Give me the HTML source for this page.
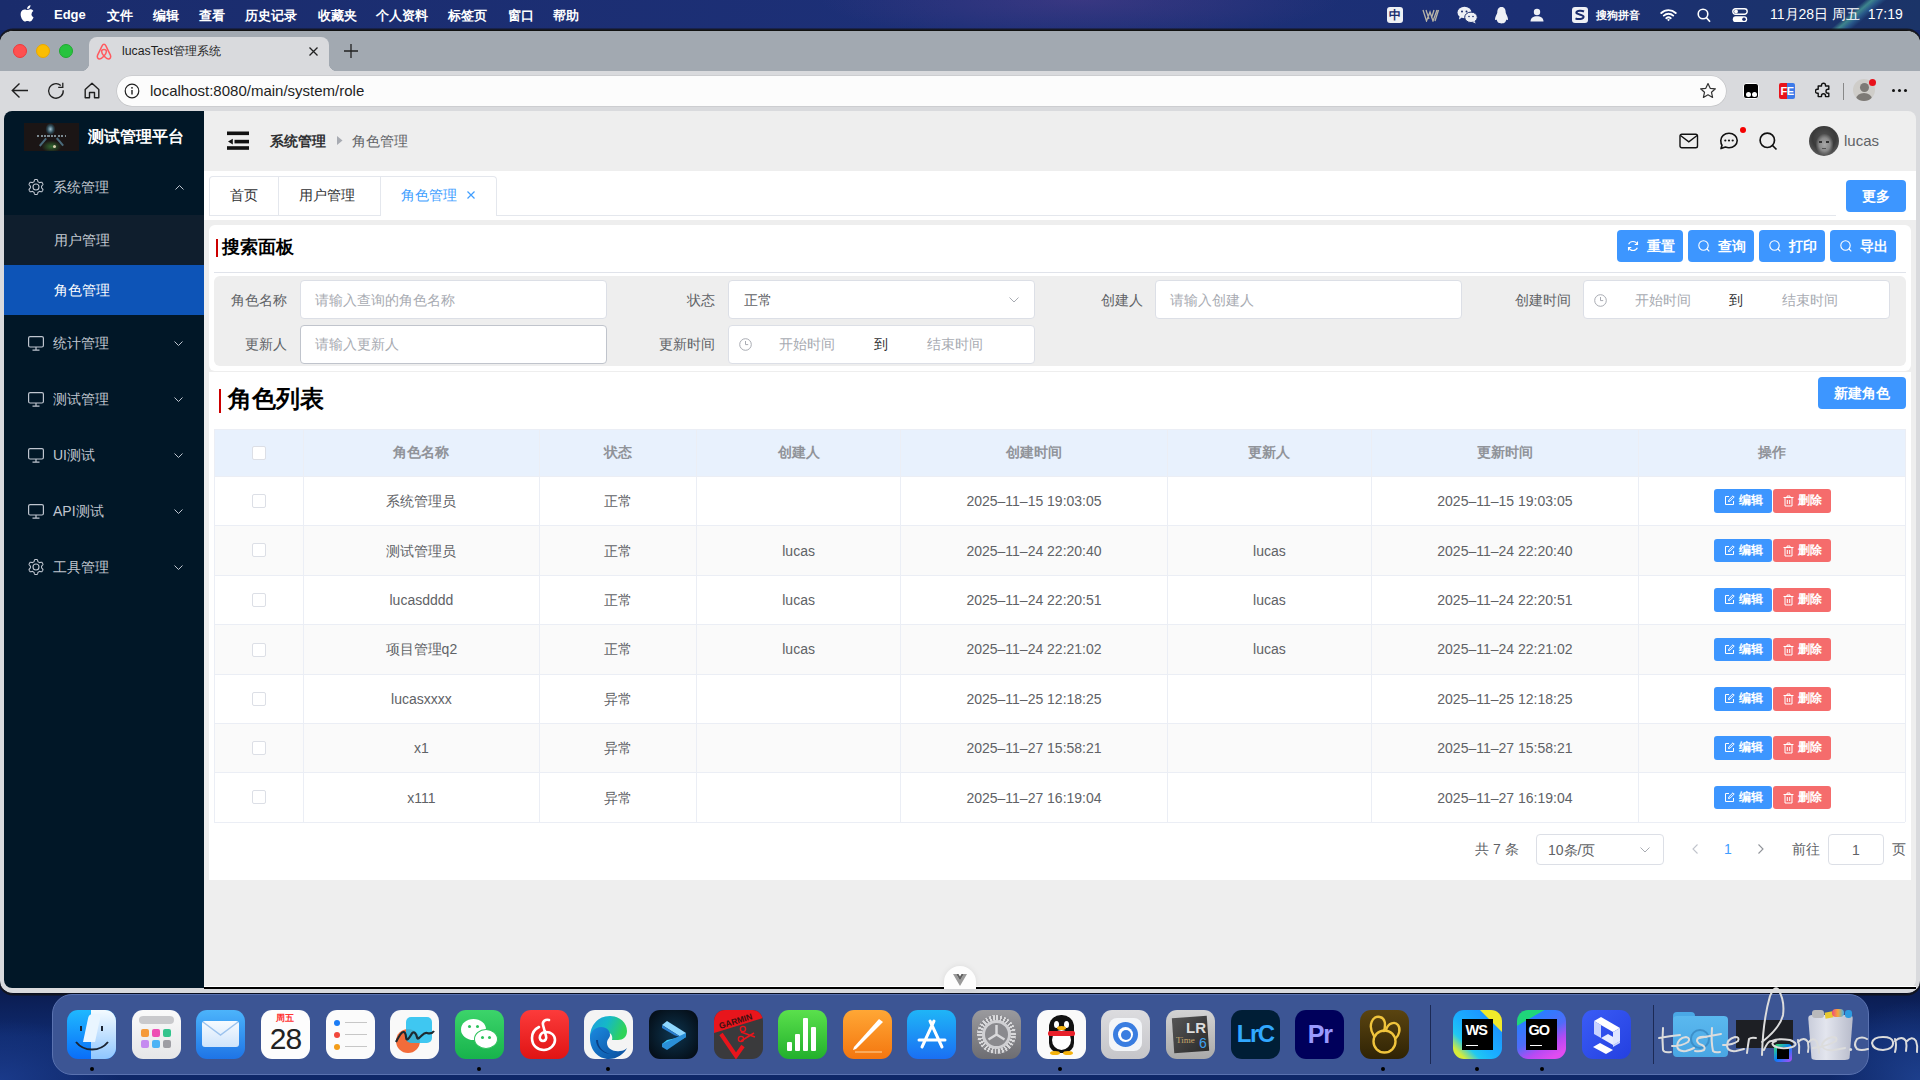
<!DOCTYPE html>
<html><head><meta charset="utf-8">
<style>
*{box-sizing:border-box;margin:0;padding:0}
html,body{width:1920px;height:1080px;overflow:hidden}
body{font-family:"Liberation Sans",sans-serif;position:relative;background:#0b1a4c}
.abs{position:absolute}
#desk{left:0;top:0;width:1920px;height:1080px;background:radial-gradient(ellipse 120px 60px at 0 1080px,#1a3a8a,transparent),radial-gradient(ellipse 90px 80px at 1920px 1080px,#1d3f8c,transparent),linear-gradient(180deg,#13266a 0%,#0b1d52 92%,#0f2a6e 96%,#0f2868 100%)}
#menubar{left:0;top:0;width:1920px;height:30px;background:radial-gradient(ellipse 260px 40px at 1080px 0,rgba(110,70,150,.35),transparent),linear-gradient(90deg,#1a2c6c 0%,#1d3078 50%,#1b2f74 80%,#1b3468 100%);color:#fff;font-size:14px}
#menubar span{position:absolute;top:7px;line-height:17px;white-space:nowrap;font-weight:600;font-size:13px}
#win{left:0;top:30px;width:1920px;height:964px;border-radius:13px;background:#d9dadd;overflow:hidden;border-top:1px solid #111;border-bottom:1px solid #0a0f20;box-shadow:0 0 0 1.5px rgba(20,20,25,.85)}
#tabbar{left:0;top:0;width:1920px;height:40px;background:#a2a9b1}
#toolbar{left:0;top:40px;width:1920px;height:41px;background:#d9dadd}
#page{left:4px;top:111px;width:1912px;height:877px;background:#eeeeee;border-radius:8px;overflow:hidden}
.menu{left:0;width:200px;height:56px}
.mt{top:18px;font-size:14px;line-height:20px;color:#c0c6cf;white-space:nowrap}
.mt2{top:15px;font-size:14px;line-height:20px;white-space:nowrap}
.btn{background:#3d96ff;color:#fff;border-radius:4px;text-align:center;font-weight:bold;white-space:nowrap}
.inp{width:307px;height:39px;background:#fff;border:1px solid #dcdfe6;border-radius:4px}
.ph{top:9px;font-size:14px;line-height:20px;color:#a8abb2;white-space:nowrap}
.lbl{font-size:14px;line-height:20px;color:#606266;white-space:nowrap}
.hl{height:1px;background:#ebeef5}
.vl{width:1px;background:#ebeef5}
.th{text-align:center;font-size:14px;color:#909399;font-weight:bold;white-space:nowrap}
.td{text-align:center;font-size:14px;color:#606266;white-space:nowrap;padding-top:.5px}
.cb{width:14px;height:14px;border:1px solid #dcdfe6;border-radius:2px;background:#fff}
.ob{width:57.5px;height:23.6px;border-radius:3px;color:#fff;font-size:12px;font-weight:bold;white-space:nowrap}
.ob span{top:3px;line-height:17px}
.pg{font-size:14px;line-height:20px;color:#606266;white-space:nowrap}
.di{top:1010px;width:49px;height:49px;border-radius:11px;overflow:hidden}
</style></head><body>
<div id="desk" class="abs"></div>
<div id="menubar" class="abs">
 <div class="abs" style="left:1800px;top:0;width:120px;height:30px;overflow:hidden"><div class="abs" style="left:45px;top:-20px;width:14px;height:80px;transform:rotate(50deg);background:linear-gradient(90deg,transparent,rgba(90,200,170,.55),rgba(70,170,210,.3),transparent)"></div></div>
 <span style="left:20px;top:5px">
  <svg width="14" height="17" viewBox="0 0 14 17"><path fill="#fff" d="M11.6 9c0-2 1.7-3 1.8-3.1-1-1.4-2.5-1.6-3-1.6-1.3-.1-2.5.8-3.1.8-.7 0-1.7-.8-2.7-.7C3.200 4.400 2 5.200 1.300 6.400c-1.400 2.500-.4 6.100 1 8.100.7 1 1.500 2.100 2.500 2 1 0 1.400-.6 2.600-.6s1.500.6 2.600.6 1.800-1 2.400-2c.8-1.100 1.100-2.200 1.100-2.300-.1 0-2.100-.8-2.100-3.200zM9.600 3c.6-.7 1-1.700.9-2.700-.9 0-1.900.6-2.500 1.300-.6.600-1 1.600-.9 2.600 1 .1 1.900-.5 2.500-1.200z"/></svg>
 </span>
 <span style="left:54px;top:6px;font-weight:bold">Edge</span>
 <span style="left:107px">文件</span>
 <span style="left:153px">编辑</span>
 <span style="left:199px">查看</span>
 <span style="left:245px">历史记录</span>
 <span style="left:317.5px">收藏夹</span>
 <span style="left:376px">个人资料</span>
 <span style="left:447.5px">标签页</span>
 <span style="left:507.5px">窗口</span>
 <span style="left:552.5px">帮助</span>
 <div class="abs" style="left:1387px;top:7px;width:16px;height:16px;border-radius:3px;background:#eef0f5;color:#1a2c6c;font-size:12px;line-height:16px;text-align:center;font-weight:bold">中</div>
 <svg class="abs" style="left:1422px;top:9px" width="18" height="13" viewBox="0 0 18 13"><path d="M1 1l3.500 11L8 3l3 9L15 1M4 1l3 9M12 1L9.500 9M16.500 1L13 12" fill="none" stroke="#b8b4a8" stroke-width="1.300"/></svg>
 <svg class="abs" style="left:1457px;top:6px" width="21" height="18" viewBox="0 0 21 18"><ellipse cx="7.500" cy="6.500" rx="7" ry="5.800" fill="#eef0f5"/><path d="M2.500 10.500L2 13.500l3-2z" fill="#eef0f5"/><ellipse cx="14" cy="11.300" rx="6.300" ry="5.200" fill="#eef0f5" stroke="#1a2c6c" stroke-width="1"/><path d="M17.500 15l1.200 2.600-3.100-1.700z" fill="#eef0f5"/><circle cx="5" cy="5.500" r="1" fill="#1a2c6c"/><circle cx="9.500" cy="5.500" r="1" fill="#1a2c6c"/><circle cx="12" cy="10.500" r=".8" fill="#1a2c6c"/><circle cx="16" cy="10.500" r=".8" fill="#1a2c6c"/></svg>
 <svg class="abs" style="left:1494px;top:6px" width="15" height="18" viewBox="0 0 15 18"><path d="M7.500 1C4.300 1 3.300 3.500 3.300 6.500c0 1.400-2.300 4-2.300 6.500 0 1.500.8 1.300 1.600.4.4 1.500 1.200 2.700 1.700 3.200.6.600 2 .9 3.200.9s2.600-.3 3.200-.9c.5-.5 1.300-1.700 1.700-3.200.8.900 1.600 1.100 1.600-.4 0-2.500-2.300-5.100-2.300-6.500C11.700 3.500 10.700 1 7.500 1z" fill="#eef0f5"/></svg>
 <svg class="abs" style="left:1530px;top:8px" width="14" height="14" viewBox="0 0 14 14"><circle cx="7" cy="4" r="3.200" fill="#eef0f5"/><path d="M.5 13.500c0-3.500 2.800-5.200 6.500-5.200s6.500 1.700 6.500 5.200z" fill="#eef0f5"/></svg>
 <div class="abs" style="left:1572px;top:7px;width:16px;height:16px;border-radius:3px;background:#eef0f5"></div>
 <svg class="abs" style="left:1574px;top:9px" width="12" height="12" viewBox="0 0 12 12"><path d="M10 2.500C8 1.500 3 1.200 2.300 3.600 1.800 5.500 9.500 5.300 9.600 7.600 9.700 10.200 4 10.600 1.500 9.300" fill="none" stroke="#1a2c6c" stroke-width="2"/></svg>
 <span style="left:1596px;top:8px;font-size:11px;line-height:14px;font-weight:bold">搜狗拼音</span>
 <svg class="abs" style="left:1660px;top:8px" width="17" height="14" viewBox="0 0 17 14"><path d="M1.300 5A10.500 10.500 0 0 1 15.700 5M3.800 7.600a7 7 0 0 1 9.400 0M6.300 10.200a3.400 3.400 0 0 1 4.400 0" fill="none" stroke="#fff" stroke-width="1.900" stroke-linecap="round"/><path d="M8.500 13.300l-1.400-1.500a2 2 0 0 1 2.800 0z" fill="#fff"/></svg>
 <svg class="abs" style="left:1697px;top:8px" width="14" height="15" viewBox="0 0 14 15"><circle cx="6" cy="6" r="4.800" fill="none" stroke="#fff" stroke-width="1.600"/><path d="M9.500 9.800l3.500 4" stroke="#fff" stroke-width="1.700"/></svg>
 <svg class="abs" style="left:1732px;top:8px" width="16" height="15" viewBox="0 0 16 15"><rect x=".8" y=".8" width="14.400" height="5.400" rx="2.700" fill="none" stroke="#fff" stroke-width="1.400"/><circle cx="4" cy="3.500" r="1.900" fill="#fff"/><rect x=".8" y="8.300" width="14.400" height="5.800" rx="2.900" fill="#fff"/><circle cx="12" cy="11.200" r="1.800" fill="#1a2c6c"/></svg>
 <span style="left:1770px;top:6px;font-weight:500;font-size:14px">11月28日 周五&nbsp;&nbsp;17:19</span>
</div>
<div id="win" class="abs">
 <div id="tabbar" class="abs"></div>
 <div id="toolbar" class="abs"></div>
</div>
<div class="abs" style="left:13px;top:44px;width:14px;height:14px;border-radius:50%;background:#fe5050;border:1px solid #f0383a"></div>
<div class="abs" style="left:36px;top:44px;width:14px;height:14px;border-radius:50%;background:#fbbd02;border:1px solid #eaa800"></div>
<div class="abs" style="left:59px;top:44px;width:14px;height:14px;border-radius:50%;background:#28c33f;border:1px solid #1faa30"></div>
<!-- tab -->
<div class="abs" style="left:89px;top:37px;width:240px;height:35px;background:#d9dadd;border-radius:8px 8px 0 0"></div>
<div class="abs" style="left:81px;top:63px;width:8px;height:8px;background:radial-gradient(circle at 0 0,#a2a9b1 8px,#d9dadd 8.5px)"></div>
<div class="abs" style="left:329px;top:63px;width:8px;height:8px;background:radial-gradient(circle at 100% 0,#a2a9b1 8px,#d9dadd 8.5px)"></div>
<svg class="abs" style="left:96px;top:43px" width="16" height="17" viewBox="0 0 16 17"><path fill="none" stroke="#ff5a5f" stroke-width="1.5" d="M8 1.2c-.9 0-1.400.6-1.900 1.600L1.600 12.100c-.9 2 .2 3.900 2.100 3.900 1.500 0 2.800-1.200 4.300-2.900 1.500 1.700 2.800 2.900 4.300 2.900 1.900 0 3-1.900 2.100-3.900L9.900 2.800C9.400 1.800 8.900 1.200 8 1.200zM8 13.100c-1.500-1.900-2.400-3.400-2.400-4.600 0-1.300.9-2.100 2.400-2.100s2.400.8 2.400 2.100c0 1.200-.9 2.700-2.400 4.600z"/></svg>
<div class="abs" style="left:122px;top:43px;font-size:12.300px;line-height:16px;color:#1f1f1f;font-weight:500">lucasTest管理系统</div>
<svg class="abs" style="left:309px;top:47px" width="9" height="9" viewBox="0 0 9 9"><path d="M.5.5l8 8M8.5.5l-8 8" stroke="#222" stroke-width="1.3"/></svg>
<svg class="abs" style="left:344px;top:44px" width="14" height="14" viewBox="0 0 14 14"><path d="M7 0v14M0 7h14" stroke="#222" stroke-width="1.3"/></svg>
<!-- nav icons -->
<svg class="abs" style="left:11px;top:82px" width="18" height="17" viewBox="0 0 18 17"><path d="M17 8.5H1.5M8.500 1.500L1.300 8.500l7.200 7" fill="none" stroke="#1f1f1f" stroke-width="1.4"/></svg>
<svg class="abs" style="left:47px;top:82px" width="18" height="18" viewBox="0 0 18 18"><path d="M16.200 8.200A7.300 7.300 0 1 1 13.800 3.500" fill="none" stroke="#1f1f1f" stroke-width="1.3"/><path d="M11.200 5.400h4.600V.8" fill="none" stroke="#1f1f1f" stroke-width="1.3"/></svg>
<svg class="abs" style="left:84px;top:82px" width="16" height="17" viewBox="0 0 16 17"><path d="M1.200 7.500L8 1.300l6.800 6.200v8.200h-4.300v-5.200H5.500v5.200H1.200z" fill="none" stroke="#1f1f1f" stroke-width="1.4" stroke-linejoin="round"/></svg>
<div class="abs" style="left:117px;top:76px;width:1609px;height:30px;border-radius:15px;background:#fcfcfc;box-shadow:0 0 0 .6px rgba(0,0,0,.12)"></div>
<svg class="abs" style="left:124px;top:83px" width="16" height="16" viewBox="0 0 16 16"><circle cx="8" cy="8" r="6.8" fill="none" stroke="#1f1f1f" stroke-width="1.2"/><path d="M8 7v4.500" stroke="#1f1f1f" stroke-width="1.4"/><circle cx="8" cy="4.800" r=".9" fill="#1f1f1f"/></svg>
<div class="abs" style="left:150px;top:82px;font-size:15px;line-height:18px;color:#1f1f1f">localhost:8080/main/system/role</div>
<svg class="abs" style="left:1699px;top:82px" width="18" height="18" viewBox="0 0 18 18"><path d="M9 1.500l2.200 4.800 5.200.5-3.900 3.500 1.100 5.100L9 12.800l-4.600 2.600 1.100-5.100L1.600 6.800l5.200-.5z" fill="none" stroke="#333" stroke-width="1.2" stroke-linejoin="round"/></svg>
<div class="abs" style="left:1743px;top:83px;width:16px;height:16px;border-radius:3px;background:#000;border:1px solid #fff"></div>
<div class="abs" style="left:1746px;top:92px;width:5px;height:5px;border-radius:50%;background:#fff"></div>
<div class="abs" style="left:1751.5px;top:92px;width:5px;height:5px;border-radius:50%;background:#fff"></div>
<div class="abs" style="left:1779px;top:83px;width:16px;height:16px;border-radius:2px;background:linear-gradient(90deg,#e8141b 50%,#3d7ae8 50%);color:#fff;font-weight:bold;font-size:11px;line-height:16px;text-align:center;letter-spacing:-.5px">FE</div>
<svg class="abs" style="left:1815px;top:82px" width="17" height="18" viewBox="0 0 17 18"><path d="M6.500 3.200a2 2 0 0 1 4 0V4h3.300v3.300h-.8a2 2 0 0 0 0 4h.8v3.300h-3.300v-.8a2 2 0 0 0-4 0v.8H3.200v-3.300H2.400a2 2 0 0 1 0-4h.8V4h3.300z" fill="none" stroke="#111" stroke-width="1.4" stroke-linejoin="round"/></svg>
<div class="abs" style="left:1843px;top:83px;width:1px;height:17px;background:#888"></div>
<div class="abs" style="left:1853px;top:79px;width:22px;height:22px;border-radius:50%;background:#cfcdc9;overflow:hidden">
 <div class="abs" style="left:6.5px;top:4px;width:9px;height:9px;border-radius:50%;background:#7d7a76"></div>
 <div class="abs" style="left:3px;top:14px;width:16px;height:12px;border-radius:50%;background:#7d7a76"></div>
</div>
<div class="abs" style="left:1869px;top:79px;width:7px;height:7px;border-radius:50%;background:#e8111a"></div>
<div class="abs" style="left:1892px;top:89px;width:3px;height:3px;border-radius:50%;background:#111;box-shadow:6px 0 0 #111,12px 0 0 #111"></div>
<div id="page" class="abs">
 <div id="side" class="abs" style="left:0;top:0;width:200px;height:877px;background:#011727">
  <div class="abs" style="left:20px;top:12px;width:55px;height:28px;background:radial-gradient(ellipse 10px 6px at 50% 84%,rgba(60,140,60,.7),transparent),radial-gradient(ellipse 5px 6px at 48% 22%,#9fc0d0,rgba(60,110,130,.6) 60%,transparent),#1b1515;overflow:hidden">
 <div class="abs" style="left:13px;top:11.500px;width:29px;height:2px;background:repeating-linear-gradient(90deg,#7c8a92 0 2px,transparent 2px 3.500px)"></div>
 <div class="abs" style="left:18px;top:14px;width:1.500px;height:10px;background:#4a6a7a;transform:rotate(40deg)"></div>
 <div class="abs" style="left:35px;top:14px;width:1.500px;height:10px;background:#4a6a7a;transform:rotate(-40deg)"></div>
 <div class="abs" style="left:29px;top:22px;width:3px;height:3px;border-radius:50%;background:#d8d0b0"></div>
</div>
  <div class="abs" style="left:84px;top:16px;font-size:16px;line-height:20px;color:#fff;font-weight:bold">测试管理平台</div>
  <div class="abs menu" style="top:48px">
   <svg class="abs" style="left:24px;top:20px" width="16" height="16" viewBox="0 0 16 16"><path fill="none" stroke="#bfc5cf" stroke-width="1.1" d="M8.00 0.50 L8.20 0.50 L8.39 0.51 L8.59 0.52 L8.78 0.54 L8.98 0.58 L9.16 0.66 L9.34 0.79 L9.49 1.01 L9.61 1.31 L9.70 1.67 L9.77 2.03 L9.84 2.34 L9.93 2.56 L10.03 2.71 L10.15 2.81 L10.28 2.88 L10.41 2.95 L10.54 3.01 L10.67 3.08 L10.80 3.15 L10.93 3.23 L11.05 3.30 L11.17 3.38 L11.29 3.47 L11.42 3.54 L11.56 3.60 L11.75 3.61 L11.98 3.58 L12.28 3.49 L12.63 3.37 L12.99 3.27 L13.31 3.22 L13.58 3.24 L13.78 3.32 L13.94 3.45 L14.06 3.59 L14.18 3.75 L14.29 3.92 L14.39 4.08 L14.50 4.25 L14.59 4.42 L14.68 4.60 L14.77 4.77 L14.85 4.95 L14.91 5.14 L14.94 5.34 L14.91 5.55 L14.80 5.79 L14.59 6.05 L14.33 6.30 L14.05 6.55 L13.82 6.76 L13.67 6.95 L13.59 7.11 L13.57 7.27 L13.57 7.41 L13.58 7.56 L13.59 7.71 L13.60 7.85 L13.60 8.00 L13.60 8.15 L13.59 8.29 L13.58 8.44 L13.57 8.59 L13.57 8.73 L13.59 8.89 L13.67 9.05 L13.82 9.24 L14.05 9.45 L14.33 9.70 L14.59 9.95 L14.80 10.21 L14.91 10.45 L14.94 10.66 L14.91 10.86 L14.85 11.05 L14.77 11.23 L14.68 11.40 L14.59 11.58 L14.50 11.75 L14.39 11.92 L14.29 12.08 L14.18 12.25 L14.06 12.41 L13.94 12.55 L13.78 12.68 L13.58 12.76 L13.31 12.78 L12.99 12.73 L12.63 12.63 L12.28 12.51 L11.98 12.42 L11.75 12.39 L11.56 12.40 L11.42 12.46 L11.29 12.53 L11.17 12.62 L11.05 12.70 L10.93 12.77 L10.80 12.85 L10.67 12.92 L10.54 12.99 L10.41 13.05 L10.28 13.12 L10.15 13.19 L10.03 13.29 L9.93 13.44 L9.84 13.66 L9.77 13.97 L9.70 14.33 L9.61 14.69 L9.49 14.99 L9.34 15.21 L9.16 15.34 L8.98 15.42 L8.78 15.46 L8.59 15.48 L8.39 15.49 L8.20 15.50 L8.00 15.50 L7.80 15.50 L7.61 15.49 L7.41 15.48 L7.22 15.46 L7.02 15.42 L6.84 15.34 L6.66 15.21 L6.51 14.99 L6.39 14.69 L6.30 14.33 L6.23 13.97 L6.16 13.66 L6.07 13.44 L5.97 13.29 L5.85 13.19 L5.72 13.12 L5.59 13.05 L5.46 12.99 L5.33 12.92 L5.20 12.85 L5.07 12.77 L4.95 12.70 L4.83 12.62 L4.71 12.53 L4.58 12.46 L4.44 12.40 L4.25 12.39 L4.02 12.42 L3.72 12.51 L3.37 12.63 L3.01 12.73 L2.69 12.78 L2.42 12.76 L2.22 12.68 L2.06 12.55 L1.94 12.41 L1.82 12.25 L1.71 12.08 L1.61 11.92 L1.50 11.75 L1.41 11.58 L1.32 11.40 L1.23 11.23 L1.15 11.05 L1.09 10.86 L1.06 10.66 L1.09 10.45 L1.20 10.21 L1.41 9.95 L1.67 9.70 L1.95 9.45 L2.18 9.24 L2.33 9.05 L2.41 8.89 L2.43 8.73 L2.43 8.59 L2.42 8.44 L2.41 8.29 L2.40 8.15 L2.40 8.00 L2.40 7.85 L2.41 7.71 L2.42 7.56 L2.43 7.41 L2.43 7.27 L2.41 7.11 L2.33 6.95 L2.18 6.76 L1.95 6.55 L1.67 6.30 L1.41 6.05 L1.20 5.79 L1.09 5.55 L1.06 5.34 L1.09 5.14 L1.15 4.95 L1.23 4.77 L1.32 4.60 L1.41 4.42 L1.50 4.25 L1.61 4.08 L1.71 3.92 L1.82 3.75 L1.94 3.59 L2.06 3.45 L2.22 3.32 L2.42 3.24 L2.69 3.22 L3.01 3.27 L3.37 3.37 L3.72 3.49 L4.02 3.58 L4.25 3.61 L4.44 3.60 L4.58 3.54 L4.71 3.47 L4.83 3.38 L4.95 3.30 L5.07 3.23 L5.20 3.15 L5.33 3.08 L5.46 3.01 L5.59 2.95 L5.72 2.88 L5.85 2.81 L5.97 2.71 L6.07 2.56 L6.16 2.34 L6.23 2.03 L6.30 1.67 L6.39 1.31 L6.51 1.01 L6.66 0.79 L6.84 0.66 L7.02 0.58 L7.22 0.54 L7.41 0.52 L7.61 0.51 L7.80 0.50Z"/><circle cx="8" cy="8" r="3" fill="none" stroke="#bfc5cf" stroke-width="1.1"/></svg>
   <span class="abs mt" style="left:49px">系统管理</span>
   <svg class="abs" style="left:171px;top:26px" width="9" height="5" viewBox="0 0 9 5"><path d="M.5 4.500L4.500.5l4 4" fill="none" stroke="#bfc5cf" stroke-width="1"/></svg>
  </div>
  <div class="abs" style="left:0;top:104px;width:200px;height:50px;background:#0f1e2d"><span class="abs mt2" style="left:50px;color:#c6ccd4">用户管理</span></div>
  <div class="abs" style="left:0;top:154px;width:200px;height:50px;background:#0d54b7"><span class="abs mt2" style="left:50px;color:#fff;font-weight:500">角色管理</span></div>
  <div class="abs menu" style="top:204px"><svg class="abs mon" style="left:24px;top:21px" width="16" height="15" viewBox="0 0 16 15"><rect x=".6" y=".6" width="14.800" height="10.400" rx="1.500" fill="none" stroke="#bfc5cf" stroke-width="1.200"/><path d="M8 11v3M4.500 14.200h7" stroke="#bfc5cf" stroke-width="1.200"/></svg><span class="abs mt" style="left:49px">统计管理</span><svg class="abs" style="left:170px;top:26px" width="9" height="5" viewBox="0 0 9 5"><path d="M.5.5l4 4 4-4" fill="none" stroke="#bfc5cf" stroke-width="1"/></svg></div>
  <div class="abs menu" style="top:260px"><svg class="abs mon" style="left:24px;top:21px" width="16" height="15" viewBox="0 0 16 15"><rect x=".6" y=".6" width="14.800" height="10.400" rx="1.500" fill="none" stroke="#bfc5cf" stroke-width="1.200"/><path d="M8 11v3M4.500 14.200h7" stroke="#bfc5cf" stroke-width="1.200"/></svg><span class="abs mt" style="left:49px">测试管理</span><svg class="abs" style="left:170px;top:26px" width="9" height="5" viewBox="0 0 9 5"><path d="M.5.5l4 4 4-4" fill="none" stroke="#bfc5cf" stroke-width="1"/></svg></div>
  <div class="abs menu" style="top:316px"><svg class="abs mon" style="left:24px;top:21px" width="16" height="15" viewBox="0 0 16 15"><rect x=".6" y=".6" width="14.800" height="10.400" rx="1.500" fill="none" stroke="#bfc5cf" stroke-width="1.200"/><path d="M8 11v3M4.500 14.200h7" stroke="#bfc5cf" stroke-width="1.200"/></svg><span class="abs mt" style="left:49px">UI测试</span><svg class="abs" style="left:170px;top:26px" width="9" height="5" viewBox="0 0 9 5"><path d="M.5.5l4 4 4-4" fill="none" stroke="#bfc5cf" stroke-width="1"/></svg></div>
  <div class="abs menu" style="top:372px"><svg class="abs mon" style="left:24px;top:21px" width="16" height="15" viewBox="0 0 16 15"><rect x=".6" y=".6" width="14.800" height="10.400" rx="1.500" fill="none" stroke="#bfc5cf" stroke-width="1.200"/><path d="M8 11v3M4.500 14.200h7" stroke="#bfc5cf" stroke-width="1.200"/></svg><span class="abs mt" style="left:49px">API测试</span><svg class="abs" style="left:170px;top:26px" width="9" height="5" viewBox="0 0 9 5"><path d="M.5.5l4 4 4-4" fill="none" stroke="#bfc5cf" stroke-width="1"/></svg></div>
  <div class="abs menu" style="top:428px"><svg class="abs" style="left:24px;top:20px" width="16" height="16" viewBox="0 0 16 16"><path fill="none" stroke="#bfc5cf" stroke-width="1.1" d="M8.00 0.50 L8.20 0.50 L8.39 0.51 L8.59 0.52 L8.78 0.54 L8.98 0.58 L9.16 0.66 L9.34 0.79 L9.49 1.01 L9.61 1.31 L9.70 1.67 L9.77 2.03 L9.84 2.34 L9.93 2.56 L10.03 2.71 L10.15 2.81 L10.28 2.88 L10.41 2.95 L10.54 3.01 L10.67 3.08 L10.80 3.15 L10.93 3.23 L11.05 3.30 L11.17 3.38 L11.29 3.47 L11.42 3.54 L11.56 3.60 L11.75 3.61 L11.98 3.58 L12.28 3.49 L12.63 3.37 L12.99 3.27 L13.31 3.22 L13.58 3.24 L13.78 3.32 L13.94 3.45 L14.06 3.59 L14.18 3.75 L14.29 3.92 L14.39 4.08 L14.50 4.25 L14.59 4.42 L14.68 4.60 L14.77 4.77 L14.85 4.95 L14.91 5.14 L14.94 5.34 L14.91 5.55 L14.80 5.79 L14.59 6.05 L14.33 6.30 L14.05 6.55 L13.82 6.76 L13.67 6.95 L13.59 7.11 L13.57 7.27 L13.57 7.41 L13.58 7.56 L13.59 7.71 L13.60 7.85 L13.60 8.00 L13.60 8.15 L13.59 8.29 L13.58 8.44 L13.57 8.59 L13.57 8.73 L13.59 8.89 L13.67 9.05 L13.82 9.24 L14.05 9.45 L14.33 9.70 L14.59 9.95 L14.80 10.21 L14.91 10.45 L14.94 10.66 L14.91 10.86 L14.85 11.05 L14.77 11.23 L14.68 11.40 L14.59 11.58 L14.50 11.75 L14.39 11.92 L14.29 12.08 L14.18 12.25 L14.06 12.41 L13.94 12.55 L13.78 12.68 L13.58 12.76 L13.31 12.78 L12.99 12.73 L12.63 12.63 L12.28 12.51 L11.98 12.42 L11.75 12.39 L11.56 12.40 L11.42 12.46 L11.29 12.53 L11.17 12.62 L11.05 12.70 L10.93 12.77 L10.80 12.85 L10.67 12.92 L10.54 12.99 L10.41 13.05 L10.28 13.12 L10.15 13.19 L10.03 13.29 L9.93 13.44 L9.84 13.66 L9.77 13.97 L9.70 14.33 L9.61 14.69 L9.49 14.99 L9.34 15.21 L9.16 15.34 L8.98 15.42 L8.78 15.46 L8.59 15.48 L8.39 15.49 L8.20 15.50 L8.00 15.50 L7.80 15.50 L7.61 15.49 L7.41 15.48 L7.22 15.46 L7.02 15.42 L6.84 15.34 L6.66 15.21 L6.51 14.99 L6.39 14.69 L6.30 14.33 L6.23 13.97 L6.16 13.66 L6.07 13.44 L5.97 13.29 L5.85 13.19 L5.72 13.12 L5.59 13.05 L5.46 12.99 L5.33 12.92 L5.20 12.85 L5.07 12.77 L4.95 12.70 L4.83 12.62 L4.71 12.53 L4.58 12.46 L4.44 12.40 L4.25 12.39 L4.02 12.42 L3.72 12.51 L3.37 12.63 L3.01 12.73 L2.69 12.78 L2.42 12.76 L2.22 12.68 L2.06 12.55 L1.94 12.41 L1.82 12.25 L1.71 12.08 L1.61 11.92 L1.50 11.75 L1.41 11.58 L1.32 11.40 L1.23 11.23 L1.15 11.05 L1.09 10.86 L1.06 10.66 L1.09 10.45 L1.20 10.21 L1.41 9.95 L1.67 9.70 L1.95 9.45 L2.18 9.24 L2.33 9.05 L2.41 8.89 L2.43 8.73 L2.43 8.59 L2.42 8.44 L2.41 8.29 L2.40 8.15 L2.40 8.00 L2.40 7.85 L2.41 7.71 L2.42 7.56 L2.43 7.41 L2.43 7.27 L2.41 7.11 L2.33 6.95 L2.18 6.76 L1.95 6.55 L1.67 6.30 L1.41 6.05 L1.20 5.79 L1.09 5.55 L1.06 5.34 L1.09 5.14 L1.15 4.95 L1.23 4.77 L1.32 4.60 L1.41 4.42 L1.50 4.25 L1.61 4.08 L1.71 3.92 L1.82 3.75 L1.94 3.59 L2.06 3.45 L2.22 3.32 L2.42 3.24 L2.69 3.22 L3.01 3.27 L3.37 3.37 L3.72 3.49 L4.02 3.58 L4.25 3.61 L4.44 3.60 L4.58 3.54 L4.71 3.47 L4.83 3.38 L4.95 3.30 L5.07 3.23 L5.20 3.15 L5.33 3.08 L5.46 3.01 L5.59 2.95 L5.72 2.88 L5.85 2.81 L5.97 2.71 L6.07 2.56 L6.16 2.34 L6.23 2.03 L6.30 1.67 L6.39 1.31 L6.51 1.01 L6.66 0.79 L6.84 0.66 L7.02 0.58 L7.22 0.54 L7.41 0.52 L7.61 0.51 L7.80 0.50Z"/><circle cx="8" cy="8" r="3" fill="none" stroke="#bfc5cf" stroke-width="1.1"/></svg><span class="abs mt" style="left:49px">工具管理</span><svg class="abs" style="left:170px;top:26px" width="9" height="5" viewBox="0 0 9 5"><path d="M.5.5l4 4 4-4" fill="none" stroke="#bfc5cf" stroke-width="1"/></svg></div>
 </div>
 <!-- header -->
 <svg class="abs" style="left:223px;top:20px" width="23" height="19" viewBox="0 0 23 19"><rect x="0" y=".5" width="22" height="3.600" fill="#111"/><rect x="7.500" y="8.800" width="14.500" height="3.600" fill="#111"/><path d="M1 10.600L5.800 7.800v5.600z" fill="#111"/><rect x="0" y="15.200" width="22" height="3.600" fill="#111"/></svg>
 <span class="abs" style="left:266px;top:20px;font-size:14px;line-height:20px;color:#303133;font-weight:600">系统管理</span>
 <svg class="abs" style="left:333px;top:25px" width="6" height="9" viewBox="0 0 6 9"><path d="M0 0l5.500 4.500L0 9z" fill="#a8abb2"/></svg>
 <span class="abs" style="left:348px;top:20px;font-size:14px;line-height:20px;color:#606266">角色管理</span>
 <svg class="abs" style="left:1675px;top:22px" width="20" height="16" viewBox="0 0 20 16"><rect x="1" y="1.200" width="17.500" height="13.500" rx="1.800" fill="none" stroke="#111" stroke-width="1.400"/><path d="M1.500 2.500l8.300 6.300 8.300-6.300" fill="none" stroke="#111" stroke-width="1.400"/></svg>
 <svg class="abs" style="left:1715px;top:21px" width="20" height="18" viewBox="0 0 20 18"><path d="M10 1.300c4.600 0 8.200 3.200 8.200 7.200s-3.600 7.200-8.200 7.200c-1.300 0-2.500-.3-3.600-.7L2 16.600l1-3.400C1.900 11.900 1.800 10.500 1.800 8.500 1.800 4.500 5.400 1.300 10 1.300z" fill="none" stroke="#111" stroke-width="1.600" stroke-linejoin="round"/><circle cx="6.300" cy="8.500" r="1.100" fill="#111"/><circle cx="10" cy="8.500" r="1.100" fill="#111"/><circle cx="13.700" cy="8.500" r="1.100" fill="#111"/></svg>
 <div class="abs" style="left:1736px;top:16px;width:6px;height:6px;border-radius:50%;background:#f50000"></div>
 <svg class="abs" style="left:1755px;top:21px" width="19" height="19" viewBox="0 0 19 19"><circle cx="8.300" cy="8.300" r="7.200" fill="none" stroke="#111" stroke-width="1.700"/><path d="M13.500 13.500l4 4" stroke="#111" stroke-width="1.700"/></svg>
 <div class="abs" style="left:1805px;top:15px;width:30px;height:30px;border-radius:50%;overflow:hidden;background:radial-gradient(ellipse 9px 11px at 52% 62%,#a8a8a8 0%,#8a8a8a 60%,transparent 100%),radial-gradient(circle at 50% 40%,#555 0%,#3a3a3a 50%,#777 100%)">
 <div class="abs" style="left:10px;top:15px;width:3px;height:1.500px;background:#333"></div><div class="abs" style="left:17px;top:15px;width:3px;height:1.500px;background:#333"></div>
 <div class="abs" style="left:13px;top:22px;width:4px;height:1px;background:#555"></div>
</div>
 <span class="abs" style="left:1840px;top:20px;font-size:15px;line-height:20px;color:#606266">lucas</span>
 <!-- tabs strip -->
 <div class="abs" style="left:200px;top:60px;width:1712px;height:49px;background:#fff"></div>
 <div class="abs" style="left:493px;top:104px;width:1339px;height:1px;background:#e4e7ed"></div>
 <div class="abs" style="left:205px;top:65px;width:288px;height:40px;border:1px solid #e4e7ed;border-bottom:none;border-radius:4px 4px 0 0"></div>
 <div class="abs" style="left:205px;top:104px;width:171px;height:1px;background:#e4e7ed"></div>
 <div class="abs" style="left:274px;top:65px;width:1px;height:40px;background:#e4e7ed"></div>
 <div class="abs" style="left:376px;top:65px;width:1px;height:40px;background:#e4e7ed"></div>
 <span class="abs" style="left:226px;top:74px;font-size:14px;line-height:20px;color:#303133;font-weight:500">首页</span>
 <span class="abs" style="left:295px;top:74px;font-size:14px;line-height:20px;color:#303133;font-weight:500">用户管理</span>
 <span class="abs" style="left:397px;top:74px;font-size:14px;line-height:20px;color:#409eff;font-weight:500">角色管理</span>
 <svg class="abs" style="left:463px;top:80px" width="8" height="8" viewBox="0 0 8 8"><path d="M.5.5l7 7M7.500.5l-7 7" stroke="#409eff" stroke-width="1.200"/></svg>
 <div class="abs btn" style="left:1842px;top:69px;width:60px;height:32px;font-size:14px;line-height:32px">更多</div>
 <!-- search card -->
 <div class="abs" style="left:205px;top:114px;width:1702px;height:146px;background:#fff;border-radius:6px"></div>
 <div class="abs" style="left:212px;top:128px;width:2px;height:18px;background:#c00"></div>
 <span class="abs" style="left:218px;top:124px;font-size:18px;line-height:24px;color:#000;font-weight:bold">搜索面板</span>
 <div class="abs btn" style="left:1613px;top:119px;width:66px;height:32px"></div><svg class="abs" style="left:1623px;top:129px" width="12" height="12" viewBox="0 0 12 12"><path d="M10.300 4.300A4.800 4.800 0 0 0 1.600 4.300M1.700 7.700a4.800 4.800 0 0 0 8.700 0" fill="none" stroke="#fff" stroke-width="1.100"/><path d="M10.500 1.600v2.900H7.700M1.500 10.400V7.500h2.800" fill="none" stroke="#fff" stroke-width="1.100"/></svg><span class="abs" style="left:1643px;top:125px;font-size:14px;line-height:20px;color:#fff;font-weight:bold">重置</span><div class="abs btn" style="left:1684px;top:119px;width:66px;height:32px"></div><svg class="abs" style="left:1694px;top:129px" width="12" height="12" viewBox="0 0 12 12"><circle cx="5.500" cy="5.500" r="4.700" fill="none" stroke="#fff" stroke-width="1.100"/><path d="M9 9l2.300 2.300" stroke="#fff" stroke-width="1.100"/></svg><span class="abs" style="left:1714px;top:125px;font-size:14px;line-height:20px;color:#fff;font-weight:bold">查询</span><div class="abs btn" style="left:1755px;top:119px;width:66px;height:32px"></div><svg class="abs" style="left:1765px;top:129px" width="12" height="12" viewBox="0 0 12 12"><circle cx="5.500" cy="5.500" r="4.700" fill="none" stroke="#fff" stroke-width="1.100"/><path d="M9 9l2.300 2.300" stroke="#fff" stroke-width="1.100"/></svg><span class="abs" style="left:1785px;top:125px;font-size:14px;line-height:20px;color:#fff;font-weight:bold">打印</span><div class="abs btn" style="left:1826px;top:119px;width:66px;height:32px"></div><svg class="abs" style="left:1836px;top:129px" width="12" height="12" viewBox="0 0 12 12"><circle cx="5.500" cy="5.500" r="4.700" fill="none" stroke="#fff" stroke-width="1.100"/><path d="M9 9l2.300 2.300" stroke="#fff" stroke-width="1.100"/></svg><span class="abs" style="left:1856px;top:125px;font-size:14px;line-height:20px;color:#fff;font-weight:bold">导出</span>
 <div class="abs" style="left:210px;top:161px;width:1692px;height:1px;background:#e0e3ea"></div>
 <div class="abs" style="left:210px;top:165px;width:1692px;height:90px;background:#eeeeee;border-radius:6px"></div>
 <span class="abs lbl" style="left:227px;top:179px">角色名称</span>
 <div class="abs inp" style="left:295.7px;top:169.3px;border-color:#dcdfe6"><span class="abs ph" style="left:14px">请输入查询的角色名称</span></div>
 <span class="abs lbl" style="left:683px;top:179px">状态</span>
 <div class="abs inp" style="left:723.5px;top:169.3px"><span class="abs ph" style="left:15px;color:#606266">正常</span><svg class="abs" style="left:280px;top:16px" width="10" height="6" viewBox="0 0 10 6"><path d="M.5.5l4.500 4.500L9.500.5" fill="none" stroke="#a8abb2" stroke-width="1"/></svg></div>
 <span class="abs lbl" style="left:1097px;top:179px">创建人</span>
 <div class="abs inp" style="left:1151px;top:169.3px;border-color:#dcdfe6"><span class="abs ph" style="left:14px">请输入创建人</span></div>
 <span class="abs lbl" style="left:1511px;top:179px">创建时间</span>
 <div class="abs inp" style="left:1579px;top:169.3px"><svg class="abs" style="left:10px;top:13px" width="13" height="13" viewBox="0 0 13 13"><circle cx="6.500" cy="6.500" r="5.800" fill="none" stroke="#a8abb2" stroke-width="1"/><path d="M6.500 3v3.600h2.700" fill="none" stroke="#a8abb2" stroke-width="1"/></svg><span class="abs ph" style="left:50.500px">开始时间</span><span class="abs ph" style="left:145px;color:#303133">到</span><span class="abs ph" style="left:198px">结束时间</span></div>
 <span class="abs lbl" style="left:241px;top:223px">更新人</span>
 <div class="abs inp" style="left:295.7px;top:213.5px;border-color:#c0c4cc"><span class="abs ph" style="left:14px;top:8px">请输入更新人</span></div>
 <span class="abs lbl" style="left:655px;top:223px">更新时间</span>
 <div class="abs inp" style="left:723.5px;top:213.5px"><svg class="abs" style="left:10px;top:12px" width="13" height="13" viewBox="0 0 13 13"><circle cx="6.500" cy="6.500" r="5.800" fill="none" stroke="#a8abb2" stroke-width="1"/><path d="M6.500 3v3.600h2.700" fill="none" stroke="#a8abb2" stroke-width="1"/></svg><span class="abs ph" style="top:8px;left:50.500px">开始时间</span><span class="abs ph" style="top:8px;left:145px;color:#303133">到</span><span class="abs ph" style="top:8px;left:198px">结束时间</span></div>

 <!-- table card -->
 <div class="abs" style="left:205px;top:261px;width:1702px;height:508px;background:#fff"></div>
 <div class="abs" style="left:215px;top:278px;width:2px;height:24px;background:#c00"></div>
 <span class="abs" style="left:224px;top:271px;font-size:24px;line-height:34px;color:#000;font-weight:bold">角色列表</span>
 <div class="abs btn" style="left:1814px;top:266px;width:88px;height:32px;font-size:14px;line-height:32px">新建角色</div>
 <div class="abs" style="left:210.3px;top:318.3px;width:1691.2px;height:47.0px;background:#e8f1fd"></div><div class="abs" style="left:210.3px;top:414.3px;width:1691.2px;height:50.0px;background:#fafafa"></div><div class="abs" style="left:210.3px;top:513.7px;width:1691.2px;height:49.6px;background:#fafafa"></div><div class="abs" style="left:210.3px;top:612.2px;width:1691.2px;height:49.1px;background:#fafafa"></div><div class="abs hl" style="left:210.3px;top:364.8px;width:1691.2px"></div><div class="abs hl" style="left:210.3px;top:413.8px;width:1691.2px"></div><div class="abs hl" style="left:210.3px;top:463.8px;width:1691.2px"></div><div class="abs hl" style="left:210.3px;top:513.2px;width:1691.2px"></div><div class="abs hl" style="left:210.3px;top:562.8px;width:1691.2px"></div><div class="abs hl" style="left:210.3px;top:611.7px;width:1691.2px"></div><div class="abs hl" style="left:210.3px;top:660.8px;width:1691.2px"></div><div class="abs hl" style="left:210.3px;top:710.9px;width:1691.2px"></div><div class="abs hl" style="left:210.3px;top:318.3px;width:1691.2px"></div><div class="abs vl" style="left:209.8px;top:318.3px;height:393.1px"></div><div class="abs vl" style="left:299.0px;top:318.3px;height:393.1px"></div><div class="abs vl" style="left:534.8px;top:318.3px;height:393.1px"></div><div class="abs vl" style="left:692.0px;top:318.3px;height:393.1px"></div><div class="abs vl" style="left:896.2px;top:318.3px;height:393.1px"></div><div class="abs vl" style="left:1162.8px;top:318.3px;height:393.1px"></div><div class="abs vl" style="left:1367.0px;top:318.3px;height:393.1px"></div><div class="abs vl" style="left:1633.8px;top:318.3px;height:393.1px"></div><div class="abs vl" style="left:1901.0px;top:318.3px;height:393.1px"></div><div class="abs cb" style="left:248.4px;top:334.8px"></div><div class="abs th" style="left:299.5px;top:318.3px;width:235.8px;height:47.0px;line-height:47.0px">角色名称</div><div class="abs th" style="left:535.3px;top:318.3px;width:157.2px;height:47.0px;line-height:47.0px">状态</div><div class="abs th" style="left:692.5px;top:318.3px;width:204.2px;height:47.0px;line-height:47.0px">创建人</div><div class="abs th" style="left:896.7px;top:318.3px;width:266.6px;height:47.0px;line-height:47.0px">创建时间</div><div class="abs th" style="left:1163.3px;top:318.3px;width:204.2px;height:47.0px;line-height:47.0px">更新人</div><div class="abs th" style="left:1367.5px;top:318.3px;width:266.8px;height:47.0px;line-height:47.0px">更新时间</div><div class="abs th" style="left:1634.3px;top:318.3px;width:267.2px;height:47.0px;line-height:47.0px">操作</div><div class="abs cb" style="left:248.4px;top:382.8px"></div><div class="abs td" style="left:299.5px;top:365.3px;width:235.8px;height:49.0px;line-height:49.0px">系统管理员</div><div class="abs td" style="left:535.3px;top:365.3px;width:157.2px;height:49.0px;line-height:49.0px">正常</div><div class="abs td" style="left:692.5px;top:365.3px;width:204.2px;height:49.0px;line-height:49.0px"></div><div class="abs td" style="left:896.7px;top:365.3px;width:266.6px;height:49.0px;line-height:49.0px">2025–11–15 19:03:05</div><div class="abs td" style="left:1163.3px;top:365.3px;width:204.2px;height:49.0px;line-height:49.0px"></div><div class="abs td" style="left:1367.5px;top:365.3px;width:266.8px;height:49.0px;line-height:49.0px">2025–11–15 19:03:05</div><div class="abs ob" style="left:1710.2px;top:378.0px;background:#3d96ff"><svg class="abs" style="left:10px;top:6px" width="11" height="11" viewBox="0 0 11 11"><path d="M5 1.500H1.500v8h8V6" fill="none" stroke="#fff" stroke-width="1"/><path d="M4.500 6.500l.4-1.600L9 .8l1.200 1.200-4.100 4.100z" fill="none" stroke="#fff" stroke-width="1"/></svg><span class="abs" style="left:25px">编辑</span></div><div class="abs ob" style="left:1769.3px;top:378.0px;background:#f56c6c"><svg class="abs" style="left:10px;top:6px" width="11" height="12" viewBox="0 0 11 12"><path d="M.5 2.500h10M4 2.500V1h3v1.500M2 2.500v8.500h7V2.500M4.300 5v4M6.700 5v4" fill="none" stroke="#fff" stroke-width="1"/></svg><span class="abs" style="left:25px">删除</span></div><div class="abs cb" style="left:248.4px;top:432.3px"></div><div class="abs td" style="left:299.5px;top:414.3px;width:235.8px;height:50.0px;line-height:50.0px">测试管理员</div><div class="abs td" style="left:535.3px;top:414.3px;width:157.2px;height:50.0px;line-height:50.0px">正常</div><div class="abs td" style="left:692.5px;top:414.3px;width:204.2px;height:50.0px;line-height:50.0px">lucas</div><div class="abs td" style="left:896.7px;top:414.3px;width:266.6px;height:50.0px;line-height:50.0px">2025–11–24 22:20:40</div><div class="abs td" style="left:1163.3px;top:414.3px;width:204.2px;height:50.0px;line-height:50.0px">lucas</div><div class="abs td" style="left:1367.5px;top:414.3px;width:266.8px;height:50.0px;line-height:50.0px">2025–11–24 22:20:40</div><div class="abs ob" style="left:1710.2px;top:427.5px;background:#3d96ff"><svg class="abs" style="left:10px;top:6px" width="11" height="11" viewBox="0 0 11 11"><path d="M5 1.500H1.500v8h8V6" fill="none" stroke="#fff" stroke-width="1"/><path d="M4.500 6.500l.4-1.600L9 .8l1.200 1.200-4.100 4.100z" fill="none" stroke="#fff" stroke-width="1"/></svg><span class="abs" style="left:25px">编辑</span></div><div class="abs ob" style="left:1769.3px;top:427.5px;background:#f56c6c"><svg class="abs" style="left:10px;top:6px" width="11" height="12" viewBox="0 0 11 12"><path d="M.5 2.500h10M4 2.500V1h3v1.500M2 2.500v8.500h7V2.500M4.300 5v4M6.700 5v4" fill="none" stroke="#fff" stroke-width="1"/></svg><span class="abs" style="left:25px">删除</span></div><div class="abs cb" style="left:248.4px;top:482.0px"></div><div class="abs td" style="left:299.5px;top:464.3px;width:235.8px;height:49.4px;line-height:49.4px">lucasdddd</div><div class="abs td" style="left:535.3px;top:464.3px;width:157.2px;height:49.4px;line-height:49.4px">正常</div><div class="abs td" style="left:692.5px;top:464.3px;width:204.2px;height:49.4px;line-height:49.4px">lucas</div><div class="abs td" style="left:896.7px;top:464.3px;width:266.6px;height:49.4px;line-height:49.4px">2025–11–24 22:20:51</div><div class="abs td" style="left:1163.3px;top:464.3px;width:204.2px;height:49.4px;line-height:49.4px">lucas</div><div class="abs td" style="left:1367.5px;top:464.3px;width:266.8px;height:49.4px;line-height:49.4px">2025–11–24 22:20:51</div><div class="abs ob" style="left:1710.2px;top:477.2px;background:#3d96ff"><svg class="abs" style="left:10px;top:6px" width="11" height="11" viewBox="0 0 11 11"><path d="M5 1.500H1.500v8h8V6" fill="none" stroke="#fff" stroke-width="1"/><path d="M4.500 6.500l.4-1.600L9 .8l1.200 1.200-4.100 4.100z" fill="none" stroke="#fff" stroke-width="1"/></svg><span class="abs" style="left:25px">编辑</span></div><div class="abs ob" style="left:1769.3px;top:477.2px;background:#f56c6c"><svg class="abs" style="left:10px;top:6px" width="11" height="12" viewBox="0 0 11 12"><path d="M.5 2.500h10M4 2.500V1h3v1.500M2 2.500v8.500h7V2.500M4.300 5v4M6.700 5v4" fill="none" stroke="#fff" stroke-width="1"/></svg><span class="abs" style="left:25px">删除</span></div><div class="abs cb" style="left:248.4px;top:531.5px"></div><div class="abs td" style="left:299.5px;top:513.7px;width:235.8px;height:49.6px;line-height:49.6px">项目管理q2</div><div class="abs td" style="left:535.3px;top:513.7px;width:157.2px;height:49.6px;line-height:49.6px">正常</div><div class="abs td" style="left:692.5px;top:513.7px;width:204.2px;height:49.6px;line-height:49.6px">lucas</div><div class="abs td" style="left:896.7px;top:513.7px;width:266.6px;height:49.6px;line-height:49.6px">2025–11–24 22:21:02</div><div class="abs td" style="left:1163.3px;top:513.7px;width:204.2px;height:49.6px;line-height:49.6px">lucas</div><div class="abs td" style="left:1367.5px;top:513.7px;width:266.8px;height:49.6px;line-height:49.6px">2025–11–24 22:21:02</div><div class="abs ob" style="left:1710.2px;top:526.7px;background:#3d96ff"><svg class="abs" style="left:10px;top:6px" width="11" height="11" viewBox="0 0 11 11"><path d="M5 1.500H1.500v8h8V6" fill="none" stroke="#fff" stroke-width="1"/><path d="M4.500 6.500l.4-1.600L9 .8l1.200 1.200-4.100 4.100z" fill="none" stroke="#fff" stroke-width="1"/></svg><span class="abs" style="left:25px">编辑</span></div><div class="abs ob" style="left:1769.3px;top:526.7px;background:#f56c6c"><svg class="abs" style="left:10px;top:6px" width="11" height="12" viewBox="0 0 11 12"><path d="M.5 2.500h10M4 2.500V1h3v1.500M2 2.500v8.500h7V2.500M4.300 5v4M6.700 5v4" fill="none" stroke="#fff" stroke-width="1"/></svg><span class="abs" style="left:25px">删除</span></div><div class="abs cb" style="left:248.4px;top:580.8px"></div><div class="abs td" style="left:299.5px;top:563.3px;width:235.8px;height:48.9px;line-height:48.9px">lucasxxxx</div><div class="abs td" style="left:535.3px;top:563.3px;width:157.2px;height:48.9px;line-height:48.9px">异常</div><div class="abs td" style="left:692.5px;top:563.3px;width:204.2px;height:48.9px;line-height:48.9px"></div><div class="abs td" style="left:896.7px;top:563.3px;width:266.6px;height:48.9px;line-height:48.9px">2025–11–25 12:18:25</div><div class="abs td" style="left:1163.3px;top:563.3px;width:204.2px;height:48.9px;line-height:48.9px"></div><div class="abs td" style="left:1367.5px;top:563.3px;width:266.8px;height:48.9px;line-height:48.9px">2025–11–25 12:18:25</div><div class="abs ob" style="left:1710.2px;top:576.0px;background:#3d96ff"><svg class="abs" style="left:10px;top:6px" width="11" height="11" viewBox="0 0 11 11"><path d="M5 1.500H1.500v8h8V6" fill="none" stroke="#fff" stroke-width="1"/><path d="M4.500 6.500l.4-1.600L9 .8l1.200 1.200-4.100 4.100z" fill="none" stroke="#fff" stroke-width="1"/></svg><span class="abs" style="left:25px">编辑</span></div><div class="abs ob" style="left:1769.3px;top:576.0px;background:#f56c6c"><svg class="abs" style="left:10px;top:6px" width="11" height="12" viewBox="0 0 11 12"><path d="M.5 2.500h10M4 2.500V1h3v1.500M2 2.500v8.500h7V2.500M4.300 5v4M6.700 5v4" fill="none" stroke="#fff" stroke-width="1"/></svg><span class="abs" style="left:25px">删除</span></div><div class="abs cb" style="left:248.4px;top:629.8px"></div><div class="abs td" style="left:299.5px;top:612.2px;width:235.8px;height:49.1px;line-height:49.1px">x1</div><div class="abs td" style="left:535.3px;top:612.2px;width:157.2px;height:49.1px;line-height:49.1px">异常</div><div class="abs td" style="left:692.5px;top:612.2px;width:204.2px;height:49.1px;line-height:49.1px"></div><div class="abs td" style="left:896.7px;top:612.2px;width:266.6px;height:49.1px;line-height:49.1px">2025–11–27 15:58:21</div><div class="abs td" style="left:1163.3px;top:612.2px;width:204.2px;height:49.1px;line-height:49.1px"></div><div class="abs td" style="left:1367.5px;top:612.2px;width:266.8px;height:49.1px;line-height:49.1px">2025–11–27 15:58:21</div><div class="abs ob" style="left:1710.2px;top:625.0px;background:#3d96ff"><svg class="abs" style="left:10px;top:6px" width="11" height="11" viewBox="0 0 11 11"><path d="M5 1.500H1.500v8h8V6" fill="none" stroke="#fff" stroke-width="1"/><path d="M4.500 6.500l.4-1.600L9 .8l1.200 1.200-4.100 4.100z" fill="none" stroke="#fff" stroke-width="1"/></svg><span class="abs" style="left:25px">编辑</span></div><div class="abs ob" style="left:1769.3px;top:625.0px;background:#f56c6c"><svg class="abs" style="left:10px;top:6px" width="11" height="12" viewBox="0 0 11 12"><path d="M.5 2.500h10M4 2.500V1h3v1.500M2 2.500v8.500h7V2.500M4.300 5v4M6.700 5v4" fill="none" stroke="#fff" stroke-width="1"/></svg><span class="abs" style="left:25px">删除</span></div><div class="abs cb" style="left:248.4px;top:679.3px"></div><div class="abs td" style="left:299.5px;top:661.3px;width:235.8px;height:50.1px;line-height:50.1px">x111</div><div class="abs td" style="left:535.3px;top:661.3px;width:157.2px;height:50.1px;line-height:50.1px">异常</div><div class="abs td" style="left:692.5px;top:661.3px;width:204.2px;height:50.1px;line-height:50.1px"></div><div class="abs td" style="left:896.7px;top:661.3px;width:266.6px;height:50.1px;line-height:50.1px">2025–11–27 16:19:04</div><div class="abs td" style="left:1163.3px;top:661.3px;width:204.2px;height:50.1px;line-height:50.1px"></div><div class="abs td" style="left:1367.5px;top:661.3px;width:266.8px;height:50.1px;line-height:50.1px">2025–11–27 16:19:04</div><div class="abs ob" style="left:1710.2px;top:674.5px;background:#3d96ff"><svg class="abs" style="left:10px;top:6px" width="11" height="11" viewBox="0 0 11 11"><path d="M5 1.500H1.500v8h8V6" fill="none" stroke="#fff" stroke-width="1"/><path d="M4.500 6.500l.4-1.600L9 .8l1.200 1.200-4.100 4.100z" fill="none" stroke="#fff" stroke-width="1"/></svg><span class="abs" style="left:25px">编辑</span></div><div class="abs ob" style="left:1769.3px;top:674.5px;background:#f56c6c"><svg class="abs" style="left:10px;top:6px" width="11" height="12" viewBox="0 0 11 12"><path d="M.5 2.500h10M4 2.500V1h3v1.500M2 2.500v8.500h7V2.500M4.300 5v4M6.700 5v4" fill="none" stroke="#fff" stroke-width="1"/></svg><span class="abs" style="left:25px">删除</span></div>
 <!-- pagination -->
 <span class="abs pg" style="left:1471px;top:728px">共 7 条</span>
 <div class="abs" style="left:1532px;top:722.5px;width:128px;height:31px;border:1px solid #dcdfe6;border-radius:4px;background:#fff"><span class="abs pg" style="left:11px;top:5px">10条/页</span><svg class="abs" style="left:103px;top:12px" width="10" height="6" viewBox="0 0 10 6"><path d="M.5.5l4.500 4.500L9.500.5" fill="none" stroke="#a8abb2" stroke-width="1"/></svg></div>
 <svg class="abs" style="left:1688px;top:733px" width="6" height="10" viewBox="0 0 6 10"><path d="M5.500.5L1 5l4.500 4.500" fill="none" stroke="#c0c4cc" stroke-width="1.100"/></svg>
 <span class="abs pg" style="left:1720px;top:728px;color:#409eff">1</span>
 <svg class="abs" style="left:1754px;top:733px" width="6" height="10" viewBox="0 0 6 10"><path d="M.5.5L5 5 .5 9.500" fill="none" stroke="#909399" stroke-width="1.100"/></svg>
 <span class="abs pg" style="left:1788px;top:728px">前往</span>
 <div class="abs" style="left:1824px;top:722.5px;width:56px;height:31px;border:1px solid #dcdfe6;border-radius:4px;background:#fff;text-align:center"><span class="pg" style="position:relative;top:5px">1</span></div>
 <span class="abs pg" style="left:1888px;top:728px">页</span>

</div>
<div class="abs" style="left:204px;top:986px;width:1712px;height:1px;background:#fff"></div><div class="abs" style="left:204px;top:987px;width:1712px;height:2px;background:#000"></div>
<div class="abs" style="left:944px;top:966px;width:32px;height:23px;border-radius:16px 16px 0 0;background:#fdfdfd;box-shadow:0 0 6px rgba(0,0,0,.08)"></div>
<svg class="abs" style="left:953px;top:974px" width="14" height="12" viewBox="0 0 14 12"><path d="M0 0h3.200L7 6.600 10.800 0H14L7 12z" fill="#9a9a9a"/><path d="M3.200 0h2.300L7 2.600 8.500 0h2.300L7 6.600z" fill="#5e5e5e"/></svg>
<div class="abs" style="left:51.500px;top:994px;width:1817px;height:80.500px;border-radius:20px;background:#3c5594;border:1px solid #5a72b0"></div>
<div class="abs di" style="left:67.00px;background:linear-gradient(180deg,#1fb8ff,#0a6ef8);"><div class="abs" style="left:24px;top:0;width:25px;height:49px;background:linear-gradient(180deg,#f4fbff,#8fc6ff)"></div><div class="abs" style="left:19px;top:4px;width:12px;height:28px;background:#e9f5ff;border-radius:4px 0 0 0;transform:skewX(-12deg)"></div><div class="abs" style="left:13px;top:16px;width:2px;height:5px;background:#1b2433"></div><div class="abs" style="left:34px;top:16px;width:2px;height:5px;background:#1b2433"></div><svg class="abs" style="left:8px;top:30px" width="34" height="12" viewBox="0 0 34 12"><path d="M1 2c8 10 24 10 32 0" fill="none" stroke="#1b2433" stroke-width="2"/></svg></div><div class="abs di" style="left:131.65px;background:linear-gradient(180deg,#fafafa,#e6e6e8);"><div class="abs" style="left:7px;top:6px;width:35px;height:8px;border-radius:4px;background:#c9c9cc"></div><div class="abs" style="left:9px;top:19px;width:8px;height:8px;border-radius:2px;background:#f59a3a"></div><div class="abs" style="left:20px;top:19px;width:8px;height:8px;border-radius:2px;background:#ee4fb4"></div><div class="abs" style="left:31px;top:19px;width:8px;height:8px;border-radius:2px;background:#33c48d"></div><div class="abs" style="left:9px;top:30px;width:8px;height:8px;border-radius:2px;background:#c58af0"></div><div class="abs" style="left:20px;top:30px;width:8px;height:8px;border-radius:2px;background:#4db3f5"></div><div class="abs" style="left:31px;top:30px;width:8px;height:8px;border-radius:2px;background:#9d9da3"></div></div><div class="abs di" style="left:196.30px;background:linear-gradient(180deg,#4cb4fb,#1e74e6);"><div class="abs" style="left:6px;top:11px;width:37px;height:26px;border-radius:3px;background:linear-gradient(180deg,#f7fbff,#cfe4fb)"></div><svg class="abs" style="left:6px;top:11px" width="37" height="26" viewBox="0 0 37 26"><path d="M1 1l17.500 13L36 1" fill="none" stroke="#9cc3ee" stroke-width="1.500"/></svg></div><div class="abs di" style="left:260.95px;background:#fdfdfd;"><div class="abs" style="left:0;top:3px;width:49px;text-align:center;font-size:9px;line-height:11px;color:#f33;font-weight:bold">周五</div><div class="abs" style="left:0;top:13px;width:49px;text-align:center;font-size:30px;line-height:32px;color:#222;letter-spacing:-1px">28</div></div><div class="abs di" style="left:325.60px;background:#fbfbfb;"><div class="abs" style="left:8px;top:10px;width:6px;height:6px;border-radius:50%;background:#1a7cf5"></div><div class="abs" style="left:19px;top:12px;width:22px;height:1px;background:#c7c7c7"></div><div class="abs" style="left:8px;top:22px;width:6px;height:6px;border-radius:50%;background:#f1473b"></div><div class="abs" style="left:19px;top:24px;width:22px;height:1px;background:#c7c7c7"></div><div class="abs" style="left:8px;top:34px;width:6px;height:6px;border-radius:50%;background:#f39c19"></div><div class="abs" style="left:19px;top:36px;width:22px;height:1px;background:#c7c7c7"></div></div><div class="abs di" style="left:390.25px;background:#f9f9f9;"><div class="abs" style="left:6px;top:19px;width:24px;height:24px;border-radius:50%;background:#f36c3a"></div><div class="abs" style="left:16px;top:7px;width:26px;height:26px;border-radius:5px;background:rgba(30,190,240,.85)"></div><svg class="abs" style="left:5px;top:18px" width="40" height="16" viewBox="0 0 40 16"><path d="M1 14C5 6 8 2 10 5s0 8 3 6 4-9 7-6 1 7 4 5 5-6 8-5 5 1 7-2" fill="none" stroke="#1e2a30" stroke-width="2.200"/></svg></div><div class="abs di" style="left:454.90px;background:linear-gradient(180deg,#3cd46a,#17b34c);"><div class="abs" style="left:6px;top:9px;width:25px;height:21px;border-radius:50%;background:#fff"></div><div class="abs" style="left:19px;top:19px;width:24px;height:20px;border-radius:50%;background:#fff;border:1.500px solid #2bc25a"></div><div class="abs" style="left:13px;top:15px;width:3px;height:3px;border-radius:50%;background:#2bc25a;box-shadow:8px 0 0 #2bc25a"></div><div class="abs" style="left:26px;top:26px;width:3px;height:3px;border-radius:50%;background:#2bc25a;box-shadow:7px 0 0 #2bc25a"></div></div><div class="abs di" style="left:519.55px;background:linear-gradient(180deg,#fc3b3b,#e01414);"><svg class="abs" style="left:8px;top:7px" width="34" height="36" viewBox="0 0 34 36"><path d="M21 3c-3-1-7 1-6 5l3 11c1 3-1 5-3 5s-4-2-3-5 3-4 6-4c5 0 9 3 9 8s-5 10-11 10S4 29 4 21c0-5 3-9 7-11" fill="none" stroke="#fff" stroke-width="2.600" stroke-linecap="round"/></svg></div><div class="abs di" style="left:584.20px;background:#f4f4f4;"><svg class="abs" style="left:0;top:0" width="49" height="49" viewBox="0 0 49 49"><defs><linearGradient id="eg1" x1="0" y1="0" x2="1" y2=".3"><stop offset="0" stop-color="#1e9be0"/><stop offset=".5" stop-color="#15b8c8"/><stop offset="1" stop-color="#2fd35a"/></linearGradient><linearGradient id="eg2" x1="0" y1="0" x2="1" y2="1"><stop offset="0" stop-color="#1a8ae0"/><stop offset="1" stop-color="#0b4d9c"/></linearGradient></defs><path d="M6 28C6 15 14 6 26 6c10 0 17 7 17 15 0 6-4 9-9 9h-6c1-4-1-8-6-8S14 25 14 30" fill="url(#eg1)"/><path d="M6 28c0-6 5-11 11-11 6 0 9 4 9 8 0 3-3 4-3 8 0 6 7 9 13 8 3 0 5-1 7-3-3 6-10 11-18 11C14 49 6 40 6 28z" fill="url(#eg2)"/><path d="M14 30c0 6 4 12 12 14-8-1-14-7-14-14" fill="#0a3f85"/></svg></div><div class="abs di" style="left:648.85px;background:radial-gradient(circle at 50% 50%,#0d3550,#03080f);"><svg class="abs" style="left:12px;top:9px" width="26" height="31" viewBox="0 0 26 31"><path d="M1 6l5-4 19 12-5 4z" fill="#8fd8ff"/><path d="M20 18l5-4v4L6 29l-5-4 5-4z" fill="#3ec8f5"/><path d="M1 6v3l13 7.500 6 1.500z" fill="#2a7fd0"/><path d="M1 25v3l5 3 19-13v-4z" fill="#2a8fd8"/></svg></div><div class="abs di" style="left:713.50px;background:#3a3a3c;"><svg class="abs" style="left:0;top:0" width="49" height="49" viewBox="0 0 49 49"><path d="M0 0h49v8L0 23z" fill="#e8151c"/><text x="6" y="19" font-size="8.500" font-weight="bold" fill="#3a1010" transform="rotate(-17 6 19)" font-family="Liberation Sans">GARMIN</text><path d="M7 24l15 22 7-10" fill="none" stroke="#e8151c" stroke-width="4"/><path d="M27 22l14 5M27 31l13-8" stroke="#e8151c" stroke-width="1.600"/><circle cx="29" cy="19" r="2.600" fill="none" stroke="#e8151c" stroke-width="1.400"/><circle cx="27" cy="29" r="2.600" fill="none" stroke="#e8151c" stroke-width="1.400"/></svg></div><div class="abs di" style="left:778.15px;background:linear-gradient(180deg,#5ae04c,#22b02c);"><div class="abs" style="left:9px;top:32px;width:5px;height:9px;background:#fff;border-radius:1px"></div><div class="abs" style="left:17px;top:24px;width:5px;height:17px;background:#fff;border-radius:1px"></div><div class="abs" style="left:25px;top:8px;width:5px;height:33px;background:#fff;border-radius:1px"></div><div class="abs" style="left:33px;top:17px;width:5px;height:24px;background:#fff;border-radius:1px"></div></div><div class="abs di" style="left:842.80px;background:linear-gradient(180deg,#ffa735,#f4760f);"><svg class="abs" style="left:6px;top:7px" width="38" height="36" viewBox="0 0 38 36"><path d="M30 2l4 3L7 32l-3 1 1-3z" fill="#fff"/><path d="M6 35h27" stroke="#ffd7a0" stroke-width="1"/></svg></div><div class="abs di" style="left:907.45px;background:linear-gradient(180deg,#1fb5f7,#1a6ff3);"><svg class="abs" style="left:8px;top:8px" width="34" height="33" viewBox="0 0 34 33"><path d="M19 3L7 29M15 3l12 26M4 22h26" fill="none" stroke="#fff" stroke-width="3" stroke-linecap="round"/></svg></div><div class="abs di" style="left:972.10px;background:linear-gradient(180deg,#9a9a9e,#6d6d72);"><div class="abs" style="left:5px;top:5px;width:39px;height:39px;border-radius:50%;background:repeating-conic-gradient(#d9d9db 0 6deg,#8c8c90 6deg 12deg)"></div><div class="abs" style="left:10px;top:10px;width:29px;height:29px;border-radius:50%;background:#8a8a8e;border:3px solid #d0d0d3"></div><svg class="abs" style="left:13px;top:13px" width="23" height="23" viewBox="0 0 23 23"><path d="M11.500 11.500V2M11.500 11.500l-8 5M11.500 11.500l8 5" stroke="#d9d9db" stroke-width="2.500"/></svg></div><div class="abs di" style="left:1036.75px;background:#fafafa;"><div class="abs" style="left:12px;top:5px;width:25px;height:38px;border-radius:12px 12px 10px 10px;background:#111"></div><div class="abs" style="left:15px;top:20px;width:19px;height:20px;border-radius:50%;background:#fff"></div><div class="abs" style="left:17px;top:11px;width:5px;height:7px;border-radius:50%;background:#fff"></div><div class="abs" style="left:27px;top:11px;width:5px;height:7px;border-radius:50%;background:#fff"></div><div class="abs" style="left:20px;top:16px;width:9px;height:4px;border-radius:50%;background:#f5b20c"></div><div class="abs" style="left:11px;top:21px;width:27px;height:5px;background:#e8202a;border-radius:2px"></div><div class="abs" style="left:13px;top:41px;width:10px;height:4px;border-radius:50%;background:#f5b20c"></div><div class="abs" style="left:26px;top:41px;width:10px;height:4px;border-radius:50%;background:#f5b20c"></div></div><div class="abs di" style="left:1101.40px;background:linear-gradient(180deg,#dcdcdf,#c5c5c9);"><div class="abs" style="left:8px;top:8px;width:33px;height:33px;border-radius:8px;background:#f3f5f8"></div><div class="abs" style="left:12px;top:12px;width:25px;height:25px;border-radius:50%;background:#3a7de0"></div><div class="abs" style="left:17px;top:17px;width:15px;height:15px;border-radius:50%;background:#fff"></div><div class="abs" style="left:19.500px;top:19.500px;width:10px;height:10px;border-radius:50%;background:#3a7de0"></div></div><div class="abs di" style="left:1166.05px;background:linear-gradient(180deg,#d3d3d3,#a9a9a9);"><div class="abs" style="left:7px;top:7px;width:35px;height:35px;background:linear-gradient(135deg,#555,#2a2a2a);transform:rotate(-4deg)"></div><div class="abs" style="left:20px;top:9px;font-size:15px;color:#ddd;font-weight:bold">LR</div><div class="abs" style="left:10px;top:25px;font-size:9px;color:#caa86a;font-family:'Liberation Serif',serif">Time</div><div class="abs" style="left:33px;top:25px;font-size:14px;color:#3ea3f0">6</div></div><div class="abs di" style="left:1230.70px;background:#001e36;"><div class="abs" style="left:0;top:9px;width:49px;text-align:center;font-size:24px;line-height:30px;color:#31a8ff;font-weight:bold;letter-spacing:-1.500px">LrC</div></div><div class="abs di" style="left:1295.35px;background:#00005b;"><div class="abs" style="left:0;top:9px;width:49px;text-align:center;font-size:25px;line-height:30px;color:#9999ff;font-weight:bold;letter-spacing:-1px">Pr</div></div><div class="abs di" style="left:1360.00px;background:linear-gradient(180deg,#5a4410,#2f2305);"><svg class="abs" style="left:0;top:0" width="49" height="49" viewBox="0 0 49 49"><g fill="none" stroke="#f0c43c" stroke-width="2.400" stroke-linecap="round"><circle cx="24.500" cy="31.500" r="11"/><path d="M14 26C7 15 13 5 20 7c5 1 6 7 4 14"/><path d="M26 20c2-7 9-9 12-5 3 4 1 10-2 13"/></g></svg></div><div class="abs di" style="left:1453.40px;background:linear-gradient(225deg,#f2ea2a 0%,#f2ea2a 22%,#1c96ff 23%,#1ab0ff 55%,#20c8f2 72%,#d6ec3a 88%);"><div class="abs" style="left:8.500px;top:9px;width:31px;height:31px;background:#000"></div><div class="abs" style="left:12px;top:11.500px;font-size:14.500px;line-height:16px;color:#fff;font-weight:bold;letter-spacing:-.8px">WS</div><div class="abs" style="left:12.500px;top:34.500px;width:12.500px;height:1.600px;background:#fff"></div></div><div class="abs di" style="left:1517.40px;background:linear-gradient(150deg,#1fd67a 0%,#1fd67a 20%,#2a7dff 21%,#4f6cf8 50%,#b64af4 70%,#e04cf0 88%),#2a7dff;"><div class="abs" style="left:8.500px;top:9px;width:31px;height:31px;background:#000"></div><div class="abs" style="left:11px;top:11.500px;font-size:14.500px;line-height:16px;color:#fff;font-weight:bold;letter-spacing:-.8px">GO</div><div class="abs" style="left:12.500px;top:34.500px;width:12.500px;height:1.600px;background:#fff"></div></div><div class="abs di" style="left:1582.00px;background:linear-gradient(135deg,#3a5cf6,#2440e0);"><svg class="abs" style="left:0;top:0" width="49" height="49" viewBox="0 0 49 49"><path d="M12 11l7-4 19 11-7 4z" fill="#fff"/><path d="M12 11v13l7 4V15z" fill="#c9d4ff"/><path d="M19 28l7-4 12 7-7 4z" fill="#e8edff"/><path d="M31 22l7-4v13l-7 4z" fill="#dfe6ff"/><path d="M11 37l7-4 13 7-7 4z" fill="#fff"/><path d="M31 35l7-4v2l-7 4z" fill="#c9d4ff"/></svg></div>
<div class="abs" style="left:1430px;top:1005px;width:1px;height:59px;background:#1c2a55"></div>
<div class="abs" style="left:1653px;top:1005px;width:1px;height:59px;background:#1c2a55"></div>
<div class="abs" style="left:1673px;top:1012px;width:55px;height:45px">
 <div class="abs" style="left:0;top:0;width:22px;height:8px;border-radius:4px 4px 0 0;background:#4aa8e6"></div>
 <div class="abs" style="left:0;top:4px;width:55px;height:41px;border-radius:4px;background:linear-gradient(180deg,#5ab8ef,#49a6e3)"></div>
 <div class="abs" style="left:17px;top:17px;width:20px;height:20px;border-radius:50%;border:2px solid #3d8fc9"></div>
</div>
<div class="abs" style="left:1736px;top:1020px;width:57px;height:28px;background:#1d1f24"></div>
<div class="abs" style="left:1774px;top:1044px;width:18px;height:18px;border-radius:4px;background:linear-gradient(135deg,#3bea62,#087cfa,#b74af7)"></div>
<div class="abs" style="left:1777px;top:1047px;width:12px;height:12px;background:#000"></div>
<div class="abs" style="left:1808px;top:1015px;width:45px;height:45px;border-radius:4px 4px 8px 8px;background:linear-gradient(90deg,rgba(225,225,230,.85),rgba(245,245,248,.9) 40%,rgba(205,205,212,.85));clip-path:polygon(0 0,100% 0,92% 100%,8% 100%)"></div>
<div class="abs" style="left:1812px;top:1010px;width:12px;height:8px;border-radius:3px;background:#b9b9bb"></div>
<div class="abs" style="left:1825px;top:1012px;width:8px;height:6px;background:#e8c830;transform:rotate(-10deg)"></div>
<div class="abs" style="left:1832px;top:1009px;width:12px;height:8px;border-radius:4px;background:linear-gradient(90deg,#f04a7a,#f5a83a,#43b2f0)"></div>
<div class="abs" style="left:1845px;top:1010px;width:7px;height:8px;border-radius:3px;background:#2c9be0"></div>
<div class="abs" style="left:89.5px;top:1067px;width:4px;height:4px;border-radius:50%;background:#000"></div><div class="abs" style="left:476.5px;top:1067px;width:4px;height:4px;border-radius:50%;background:#000"></div><div class="abs" style="left:605.5px;top:1067px;width:4px;height:4px;border-radius:50%;background:#000"></div><div class="abs" style="left:1058px;top:1067px;width:4px;height:4px;border-radius:50%;background:#000"></div><div class="abs" style="left:1381px;top:1067px;width:4px;height:4px;border-radius:50%;background:#000"></div><div class="abs" style="left:1475px;top:1067px;width:4px;height:4px;border-radius:50%;background:#000"></div><div class="abs" style="left:1539.5px;top:1067px;width:4px;height:4px;border-radius:50%;background:#000"></div>

<svg class="abs" style="left:1650px;top:980px" width="270" height="85" viewBox="0 0 270 85"><g fill="none" stroke="#dcdcdc" stroke-width="2" stroke-linecap="round" stroke-linejoin="round">
<path d="M13 48Q12 60 13 70Q14 73 21 72M9 58Q20 56 30 55"/>
<path d="M22 66Q32 66 38 62Q41 58 36 57Q28 58 27 66Q28 72 36 71Q40 70 44 68"/>
<path d="M56 57Q47 56 47 61Q48 64 52 65Q56 67 54 70Q50 72 45 71"/>
<path d="M62 48Q61 62 63 71Q65 73 70 72M49 58Q60 56 71 54"/>
<path d="M73 65Q83 65 88 61Q90 57 85 57Q77 59 77 66Q78 72 86 71Q90 70 94 69"/>
<path d="M97 73Q98 65 99 59Q101 57 106 58"/>
<path d="M112 75Q113 40 120 16Q124 6 128 9Q135 20 133 35Q130 48 112 62M114 70Q118 60 122 61"/>
<path d="M122 61Q128 58 140 60Q150 64 142 67Q132 70 124 66Q120 63 126 61"/>
<path d="M148 60Q150 66 149 73M148 62Q154 56 158 62Q159 68 158 72M158 63Q163 56 167 62Q169 68 169 73"/>
<path d="M163 68Q178 66 186 61Q188 57 182 57Q172 60 172 66Q174 71 184 70Q190 69 195 68"/>
<path d="M217 59Q212 56 207 59Q203 65 207 69Q211 71 218 69"/>
<path d="M233 57Q223 57 222 63Q223 70 233 70Q244 69 243 62Q242 57 233 57"/>
<path d="M245 59Q247 65 245 72M245 61Q252 55 256 61Q257 66 256 71M256 62Q262 55 266 61Q268 66 267 72"/>
</g><circle cx="200.600" cy="69.500" r="1.500" fill="#dcdcdc"/></svg>

</body></html>
